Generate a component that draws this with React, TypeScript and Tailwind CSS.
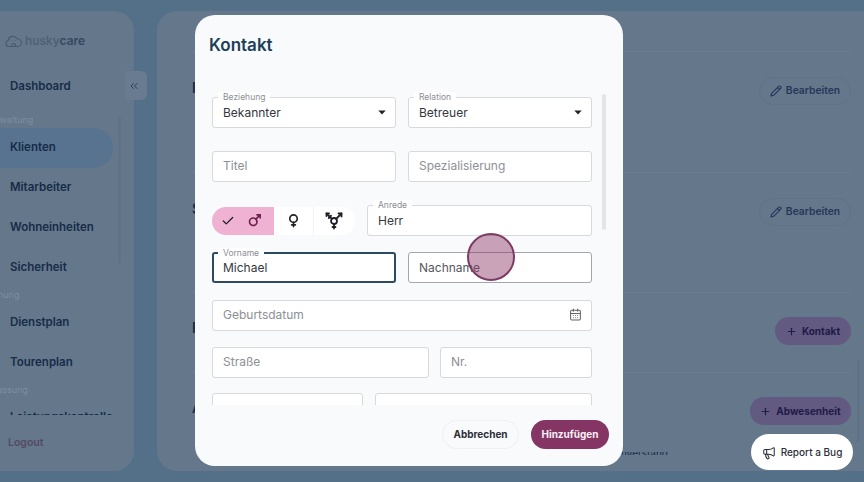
import { CalendarDays, Check, ChevronsLeft, Mars, Megaphone, Pencil, Plus, Transgender, Venus } from 'lucide-react';

const font = { fontFamily: 'Inter, "Noto Sans", sans-serif' };

const Caret = () => (
  <svg width="8" height="5" viewBox="0 0 8 5" className="shrink-0">
    <path d="M0.3 0.5h7.4L4 4.6z" fill="#1f2430" />
  </svg>
);

const Field = ({
  label,
  value,
  placeholder,
  className = '',
  focused,
  outlined,
  children,
}: {
  label?: string;
  value?: string;
  placeholder?: string;
  className?: string;
  focused?: boolean;
  outlined?: boolean;
  children?: React.ReactNode;
}) => (
  <div
    className={`relative h-[31px] flex items-center justify-between bg-white rounded-[3px] pr-[9px] text-[12px] ${
      focused ? 'border-2 border-[#2c4a63] pl-[9px]' : outlined ? 'border border-[#a3a6aa] pl-[10px]' : 'border border-[#d7d9dc] pl-[10px]'
    } ${placeholder && !outlined ? 'pb-[2px]' : ''} ${className}`}
  >
    {label && (
      <span className={`absolute -top-[6px] bg-white px-[5px] text-[8.5px] leading-[11px] text-[#8b8e93] ${focused ? 'left-[4px]' : 'left-[5px]'}`}>
        {label}
      </span>
    )}
    <span className={value ? 'text-[#33373d]' : outlined ? 'text-[#55585d]' : 'text-[#8d9095]'}>{value ?? placeholder}</span>
    {children}
  </div>
);

const NavItem = ({ label, active }: { label: string; active?: boolean }) => (
  <div
    className={`h-[40px] shrink-0 flex items-center pl-[10px] text-[11.5px] font-semibold text-[#162c47] ${
      active ? 'bg-[#587390] rounded-r-[20px] w-[113px]' : ''
    }`}
  >
    {label}
  </div>
);

const SectionLabel = ({ label }: { label: string }) => (
  <div className="-ml-[15px] h-[15px] shrink-0 leading-[13px] text-[9px] text-[#7e8ea0]">{label}</div>
);

const Edit = () => (
  <button className="flex items-center gap-[4px] h-[28px] w-[92px] justify-center rounded-full border border-[#5f7389] text-[10.3px] font-semibold text-[#26385a]">
    <Pencil size={12} strokeWidth={2.2} />
    Bearbeiten
  </button>
);

const Add = ({ label, className }: { label: string; className: string }) => (
  <button className={`flex items-center gap-[5px] h-[28px] justify-center rounded-full bg-[#625a80] text-[10px] font-bold text-[#1f1b48] ${className}`}>
    <Plus size={11} strokeWidth={2.5} />
    {label}
  </button>
);

export default function App() {
  return (
    <div className="relative w-[864px] h-[482px] overflow-hidden bg-[#547089] flex gap-[23px] py-[11px]" style={font}>
      {/* sidebar */}
      <aside className="relative w-[134px] shrink-0 bg-[#64778b] rounded-r-[20px] flex flex-col">
        <div className="h-[56px] shrink-0 flex items-center pl-[5px] gap-[3px] pt-[3px]">
          <svg width="17" height="14" viewBox="0 0 17 14" fill="none" stroke="#475a70" strokeWidth="1.1">
            <path d="M4 12.5a3.2 3.2 0 0 1-.6-6.3A4.6 4.6 0 0 1 12 4.8a3.8 3.8 0 0 1 1 7.7z" />
            <path d="M6.5 12.5c0-2 .8-3 2-3s2 1 2.500 3M7 6.5l.1.6M10 6.5l.1.6" />
          </svg>
          <span className="text-[12px] font-medium text-[#4d5f74]">
            husky<span className="font-semibold text-[#364860]">care</span>
          </span>
        </div>
        <NavItem label="Dashboard" />
        <div className="mt-[5px] flex flex-col overflow-hidden h-[303px] shrink-0">
          <div className="h-[1px] shrink-0" />
          <SectionLabel label="Verwaltung" />
          <NavItem label="Klienten" active />
          <NavItem label="Mitarbeiter" />
          <NavItem label="Wohneinheiten" />
          <NavItem label="Sicherheit" />
          <SectionLabel label="Planung" />
          <NavItem label="Dienstplan" />
          <NavItem label="Tourenplan" />
          <SectionLabel label="Erfassung" />
          <NavItem label="Leistungskontrolle" />
        </div>
        <div className="mt-[20px] pl-[8px] text-[10.5px] font-semibold text-[#554a62]">Logout</div>
        <div className="absolute left-[118px] top-[106px] w-[3px] h-[146px] bg-[#5f7288]" />
        <div className="absolute left-[125px] top-[60px] w-[22px] h-[29px] rounded-r-[6px] bg-[#687b90] flex items-center pl-[3px]">
          <ChevronsLeft size={12} strokeWidth={1.8} color="#263a58" />
        </div>
      </aside>

      {/* page behind the dialog */}
      <main className="relative flex-1 bg-[#64778b] rounded-l-[20px] pl-[35px] pr-[13px] flex flex-col overflow-hidden">
        <section className="h-[41px] shrink-0 border-b border-[#6a7d91]" />
        <section className="h-[121px] shrink-0 border-b border-[#6a7d91] flex justify-between pt-[25px]">
          <span className="text-[14px] font-semibold text-[#162c47]">I</span>
          <Edit />
        </section>
        <section className="h-[120px] shrink-0 border-b border-[#6a7d91] flex justify-between pt-[25px]">
          <span className="text-[14px] font-semibold text-[#162c47]">S</span>
          <Edit />
        </section>
        <section className="h-[80px] shrink-0 border-b border-[#6a7d91] flex justify-between pt-[24px]">
          <span className="text-[14px] font-semibold text-[#162c47]">P</span>
          <Add label="Kontakt" className="w-[76px]" />
        </section>
        <section className="flex-1 flex justify-between pt-[24px]">
          <span className="text-[14px] font-semibold text-[#162c47]">A</span>
          <Add label="Abwesenheit" className="w-[101px]" />
        </section>
        <div className="absolute right-[4px] top-[349px] w-[3px] h-[82px] bg-[#5f7288]" />
        <div className="absolute left-[431px] top-[441px] w-[80px] h-[3px] overflow-hidden text-right text-[10px] leading-[3px] text-[#162c47]">
          Sachverstand
        </div>
      </main>

      {/* dialog */}
      <div className="absolute left-[195px] top-[15px] w-[428px] h-[451px] bg-[#f9fafc] rounded-[20px] flex flex-col">
        <div className="h-[75px] shrink-0 pl-[14px] pt-[19px] text-[17px] leading-[22px] font-semibold text-[#1c3f5a]">Kontakt</div>
        <div className="h-[315px] shrink-0 pl-[17px] flex overflow-hidden">
          <div className="w-[380px] shrink-0 pt-[7px] flex flex-col">
            <div className="flex gap-[12px]">
              <Field label="Beziehung" value="Bekannter" className="w-[184px]">
                <Caret />
              </Field>
              <Field label="Relation" value="Betreuer" className="w-[184px]">
                <Caret />
              </Field>
            </div>
            <div className="flex gap-[12px] mt-[23px]">
              <Field placeholder="Titel" className="w-[184px]" />
              <Field placeholder="Spezialisierung" className="w-[184px]" />
            </div>
            <div className="flex gap-[12px] mt-[23px] items-center">
              <div className="w-[143px] h-[28px] rounded-full overflow-hidden flex bg-white text-[#1f1f28]">
                <div className="w-[62px] bg-[#f0b2d2] flex items-center justify-center gap-[12px] pr-[4px]">
                  <Check size={14} strokeWidth={2.2} />
                  <Mars size={15} strokeWidth={2.6} color="#6d1f4e" />
                </div>
                <div className="w-[40px] border-r border-[#f1f2f4] flex items-center justify-center">
                  <Venus size={15} strokeWidth={2.6} />
                </div>
                <div className="flex-1 flex items-center justify-center pr-[2px]">
                  <Transgender size={18} strokeWidth={2.4} />
                </div>
              </div>
              <Field label="Anrede" value="Herr" className="w-[225px]" />
            </div>
            <div className="flex gap-[12px] mt-[16px]">
              <Field label="Vorname" value="Michael" focused className="w-[184px]" />
              <Field placeholder="Nachname" outlined className="w-[184px]" />
            </div>
            <div className="mt-[17px]">
              <Field placeholder="Geburtsdatum" className="w-[380px]">
                <CalendarDays size={13} strokeWidth={1.9} color="#5f6368" />
              </Field>
            </div>
            <div className="flex gap-[11px] mt-[16px]">
              <Field placeholder="Straße" className="w-[217px]" />
              <Field placeholder="Nr." className="w-[152px]" />
            </div>
            <div className="flex gap-[12px] mt-[15px]">
              <Field className="w-[151px]" />
              <Field className="w-[217px]" />
            </div>
          </div>
          <div className="ml-[10px] mt-[4px] w-[4px] h-[136px] bg-[#e3e4e6] rounded-full" />
        </div>
        <div className="flex-1 flex justify-end items-start gap-[12px] pt-[15px] pr-[14px]">
          <button className="w-[77px] h-[29px] rounded-full border border-[#eff0f2] text-[10px] font-bold text-[#2b2f36]">Abbrechen</button>
          <button className="w-[78px] h-[29px] rounded-full bg-[#843563] text-[10px] font-bold text-[#fbeef5]">Hinzufügen</button>
        </div>
      </div>

      {/* click marker */}
      <div className="absolute left-[467px] top-[233px] w-[48px] h-[48px] rounded-full border-2 border-[#7c3b63] bg-[#8c3264]/45" />

      <button className="absolute left-[751px] top-[434px] w-[102px] h-[36px] rounded-full bg-white flex items-center justify-center gap-[5px] pt-[1px] text-[10px] font-medium text-[#2b2f36]">
        <Megaphone size={14} strokeWidth={1.8} />
        Report a Bug
      </button>
    </div>
  );
}
